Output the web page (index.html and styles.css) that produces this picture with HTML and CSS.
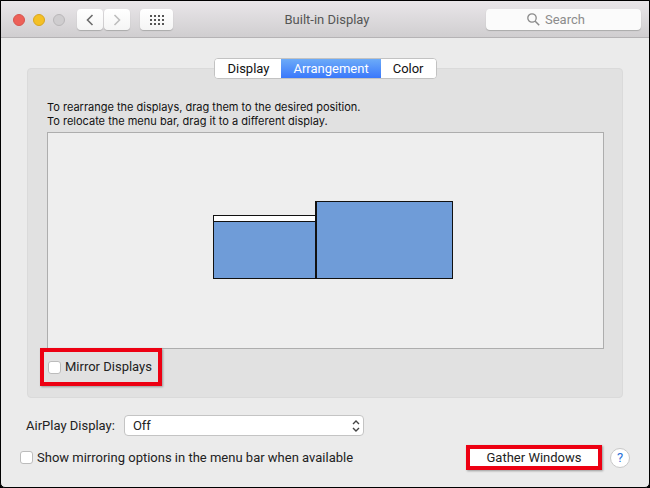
FILE: index.html
```html
<!DOCTYPE html>
<html lang="en">
<head>
<meta charset="utf-8">
<title>Built-in Display</title>
<link rel="stylesheet" href="styles.css">
</head>
<body>
<main class="window">
  <header class="titlebar">
    <div class="side">
      <div class="lights">
        <button class="light close" aria-label="Close"></button>
        <button class="light minimize" aria-label="Minimize"></button>
        <button class="light zoom" aria-label="Zoom" disabled></button>
      </div>
      <nav class="nav">
        <button class="tool" aria-label="Back"><svg width="8" height="12" viewBox="0 0 8 12"><path d="M6.5 1 1.5 6l5 5" fill="none" stroke="#6b6b6b" stroke-width="1.6"/></svg></button>
        <button class="tool" aria-label="Forward"><svg width="8" height="12" viewBox="0 0 8 12"><path d="m1.5 1 5 5-5 5" fill="none" stroke="#bdbdbd" stroke-width="1.6"/></svg></button>
      </nav>
      <button class="tool all" aria-label="Show all"><svg width="14" height="10" viewBox="0 0 14 10"><path d="M0 1h14M0 5h14M0 9h14" fill="none" stroke="#555" stroke-width="2" stroke-dasharray="2 2"/></svg></button>
    </div>
    <h1 class="title">Built-in Display</h1>
    <label class="search">
      <svg width="13" height="13" viewBox="0 0 13 13" aria-hidden="true"><circle cx="5" cy="5" r="4.2" fill="none" stroke="#8a8a8a" stroke-width="1.3"/><path d="m8.2 8.2 4 4" stroke="#8a8a8a" stroke-width="1.5"/></svg>
      <input class="search-input" type="text" placeholder="Search" aria-label="Search">
    </label>
  </header>

  <section class="panel">
    <div class="tabs">
      <button class="tab">Display</button>
      <button class="tab active">Arrangement</button>
      <button class="tab">Color</button>
    </div>
    <p class="hint">To rearrange the displays, drag them to the desired position.<br>To relocate the menu bar, drag it to a different display.</p>
    <div class="canvas">
      <div class="screen main"><div class="menubar"></div></div>
      <div class="screen second"></div>
    </div>
    <label class="check mirror highlight"><input class="box" type="checkbox">Mirror Displays</label>
  </section>

  <footer class="footer">
    <div class="airplay">
      <label for="airplay">AirPlay Display:</label>
      <span class="picker">
        <select class="select" id="airplay"><option>Off</option></select>
        <svg class="arrows" width="8" height="12" viewBox="0 0 8 12" aria-hidden="true"><path d="m1 4 3-3 3 3M1 8l3 3 3-3" fill="none" stroke="#444" stroke-width="1.4"/></svg>
      </span>
    </div>
    <div class="bottom">
      <label class="check"><input class="box" type="checkbox">Show mirroring options in the menu bar when available</label>
      <div class="actions">
        <button class="gather highlight">Gather Windows</button>
        <button class="help" aria-label="Help">?</button>
      </div>
    </div>
  </footer>
</main>
</body>
</html>
```
FILE: styles.css
```css
* { box-sizing: border-box; }
body {
  margin: 0;
  background: #000;
  color: #222;
  font: 13px/16px Roboto, "Liberation Sans", sans-serif;
}
button, input, select { margin: 0; padding: 0; border: 0; font: inherit; color: inherit; }
svg { display: block; flex: none; }
.window {
  display: flex;
  flex-direction: column;
  min-height: 100vh;
  border: 1px solid #000;
  border-radius: 0 0 5px 5px;
  background: #ebebeb;
}
.titlebar {
  display: grid;
  grid-template-columns: 1fr auto 1fr;
  align-items: center;
  height: 37px;
  padding: 1px 8px 0 12px;
  border-bottom: 1px solid #b5b3b5;
  background: linear-gradient(#e9e6e9, #d0ced0);
}
.side { display: flex; align-items: center; }
.lights { display: flex; gap: 8px; margin-right: 12px; }
.light { width: 12px; height: 12px; border-radius: 50%; }
.close { background: #ed6058; border: 1px solid #d6544e; }
.minimize { background: #f4c025; border: 1px solid #d8a51f; }
.zoom { background: #cfcdcf; border: 1px solid #b9b7b9; }
.nav { display: flex; gap: 1px; margin-right: 10px; }
.tool {
  display: grid;
  place-items: center;
  width: 26px;
  height: 21px;
  border-radius: 4px;
  background: linear-gradient(#fff, #f5f5f5);
  box-shadow: 0 1px 1px #aaa;
}
.all { width: 33px; }
.title { margin: 0; color: #555; font-size: 13px; font-weight: 400; }
.search {
  display: flex;
  justify-self: end;
  align-items: center;
  gap: 5px;
  width: 155px;
  height: 21px;
  padding-left: 41px;
  border-radius: 4px;
  background: #fbfbfb;
  box-shadow: 0 1px 1px #aaa;
}
.search-input { width: 80px; background: none; outline: 0; }
.search-input::placeholder { color: #8c8c8c; opacity: 1; }
.panel {
  margin: 30px 26px 0;
  padding: 0 18px 11px 19px;
  border: 1px solid #dadada;
  border-radius: 4px;
  background: #e1e1e1;
}
.tabs {
  display: flex;
  width: fit-content;
  height: 21px;
  margin: -11px auto 21px;
  overflow: hidden;
  border: 1px solid #c2c2c2;
  border-radius: 4px;
  background: #fff;
}
.tab { padding: 0 12px; background: #fff; color: #111; }
.active { background: linear-gradient(#6cabf8, #3a78fb); color: #fff; }
.hint { margin: 0; color: #111; font: 11px/14px Inter, "Liberation Sans", sans-serif; }
.canvas {
  position: relative;
  height: 217px;
  margin-top: 4px;
  border: 1px solid #adadad;
  background: #eee;
}
.screen { position: absolute; bottom: 69px; border: 1px solid #111; background: #6f9cd8; }
.main { left: 165px; width: 103px; height: 64px; }
.second { left: 267px; width: 138px; height: 78px; border-left-width: 2px; }
.menubar { height: 6px; border-bottom: 1px solid #111; background: #fff; }
.check { display: flex; align-items: center; gap: 4px; }
.box {
  appearance: none;
  width: 13px;
  height: 13px;
  border: 1px solid #bcbcbc;
  border-radius: 3px;
  background: #fff;
}
.highlight { border: 4px solid #ed0012; box-shadow: 1px 1px 2px #999; }
.mirror { position: relative; width: 122px; height: 38px; margin: -1px 0 0 -7px; padding-left: 4px; }
.footer { padding: 17px 19px 16px; }
.airplay { display: flex; align-items: center; gap: 9px; padding-left: 6px; }
.picker { position: relative; width: 240px; }
.select {
  display: block;
  appearance: none;
  width: 100%;
  height: 21px;
  padding-left: 8px;
  border: 1px solid #c4c4c4;
  border-radius: 4px;
  background: #fff;
}
.arrows { position: absolute; top: 5px; right: 4px; pointer-events: none; }
.bottom { display: flex; align-items: center; justify-content: space-between; margin-top: 9px; }
.actions { display: flex; align-items: center; gap: 8px; }
.gather { width: 136px; height: 25px; background: #fff; }
.help {
  width: 20px;
  height: 20px;
  border: 1px solid #c8c8c8;
  border-radius: 50%;
  background: #fff;
  color: #2870d8;
}
```
